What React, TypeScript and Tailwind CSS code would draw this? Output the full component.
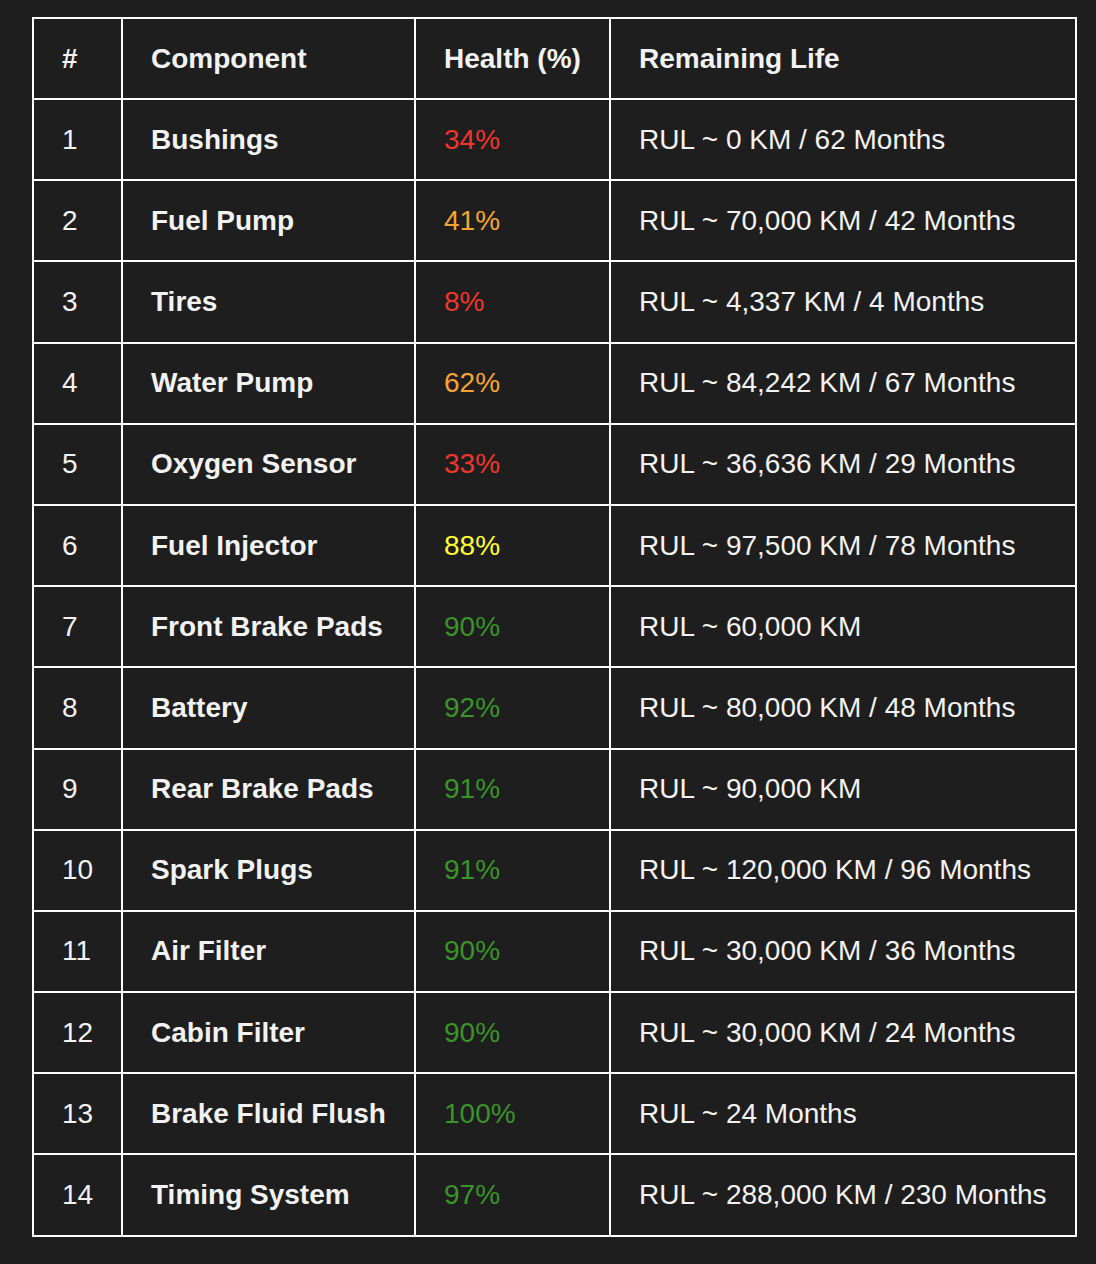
const rows = [
  { n: 1, name: 'Bushings', health: '34%', color: 'text-[#f0362a]', life: 'RUL ~ 0 KM / 62 Months' },
  { n: 2, name: 'Fuel Pump', health: '41%', color: 'text-[#f5a433]', life: 'RUL ~ 70,000 KM / 42 Months' },
  { n: 3, name: 'Tires', health: '8%', color: 'text-[#f0362a]', life: 'RUL ~ 4,337 KM / 4 Months' },
  { n: 4, name: 'Water Pump', health: '62%', color: 'text-[#f5a433]', life: 'RUL ~ 84,242 KM / 67 Months' },
  { n: 5, name: 'Oxygen Sensor', health: '33%', color: 'text-[#f0362a]', life: 'RUL ~ 36,636 KM / 29 Months' },
  { n: 6, name: 'Fuel Injector', health: '88%', color: 'text-[#ffff33]', life: 'RUL ~ 97,500 KM / 78 Months' },
  { n: 7, name: 'Front Brake Pads', health: '90%', color: 'text-[#3a9428]', life: 'RUL ~ 60,000 KM' },
  { n: 8, name: 'Battery', health: '92%', color: 'text-[#3a9428]', life: 'RUL ~ 80,000 KM / 48 Months' },
  { n: 9, name: 'Rear Brake Pads', health: '91%', color: 'text-[#3a9428]', life: 'RUL ~ 90,000 KM' },
  { n: 10, name: 'Spark Plugs', health: '91%', color: 'text-[#3a9428]', life: 'RUL ~ 120,000 KM / 96 Months' },
  { n: 11, name: 'Air Filter', health: '90%', color: 'text-[#3a9428]', life: 'RUL ~ 30,000 KM / 36 Months' },
  { n: 12, name: 'Cabin Filter', health: '90%', color: 'text-[#3a9428]', life: 'RUL ~ 30,000 KM / 24 Months' },
  { n: 13, name: 'Brake Fluid Flush', health: '100%', color: 'text-[#3a9428]', life: 'RUL ~ 24 Months' },
  { n: 14, name: 'Timing System', health: '97%', color: 'text-[#3a9428]', life: 'RUL ~ 288,000 KM / 230 Months' },
];

const cell = 'border-2 border-white pl-[28px] pr-2 text-left align-middle';

export default function App() {
  return (
    <div className="min-h-[1264px] bg-[#1e1e1e] pl-[32px] pt-[17px] font-['Liberation_Sans',Arial,sans-serif] text-[28px] text-[#f2f2f2]">
      <table className="w-[1043px] table-fixed border-collapse">
        <colgroup>
          <col className="w-[89px]" />
          <col className="w-[293px]" />
          <col className="w-[195px]" />
          <col className="w-[466px]" />
        </colgroup>
        <thead>
          <tr className="h-[81px]">
            <th className={`${cell} font-bold`}>#</th>
            <th className={`${cell} font-bold`}>Component</th>
            <th className={`${cell} font-bold`}>Health (%)</th>
            <th className={`${cell} font-bold`}>Remaining Life</th>
          </tr>
        </thead>
        <tbody>
          {rows.map((r) => (
            <tr key={r.n} className="h-[81.2px]">
              <td className={cell}>{r.n}</td>
              <td className={`${cell} font-bold`}>{r.name}</td>
              <td className={`${cell} ${r.color}`}>{r.health}</td>
              <td className={`${cell} whitespace-nowrap`}>{r.life}</td>
            </tr>
          ))}
        </tbody>
      </table>
    </div>
  );
}
